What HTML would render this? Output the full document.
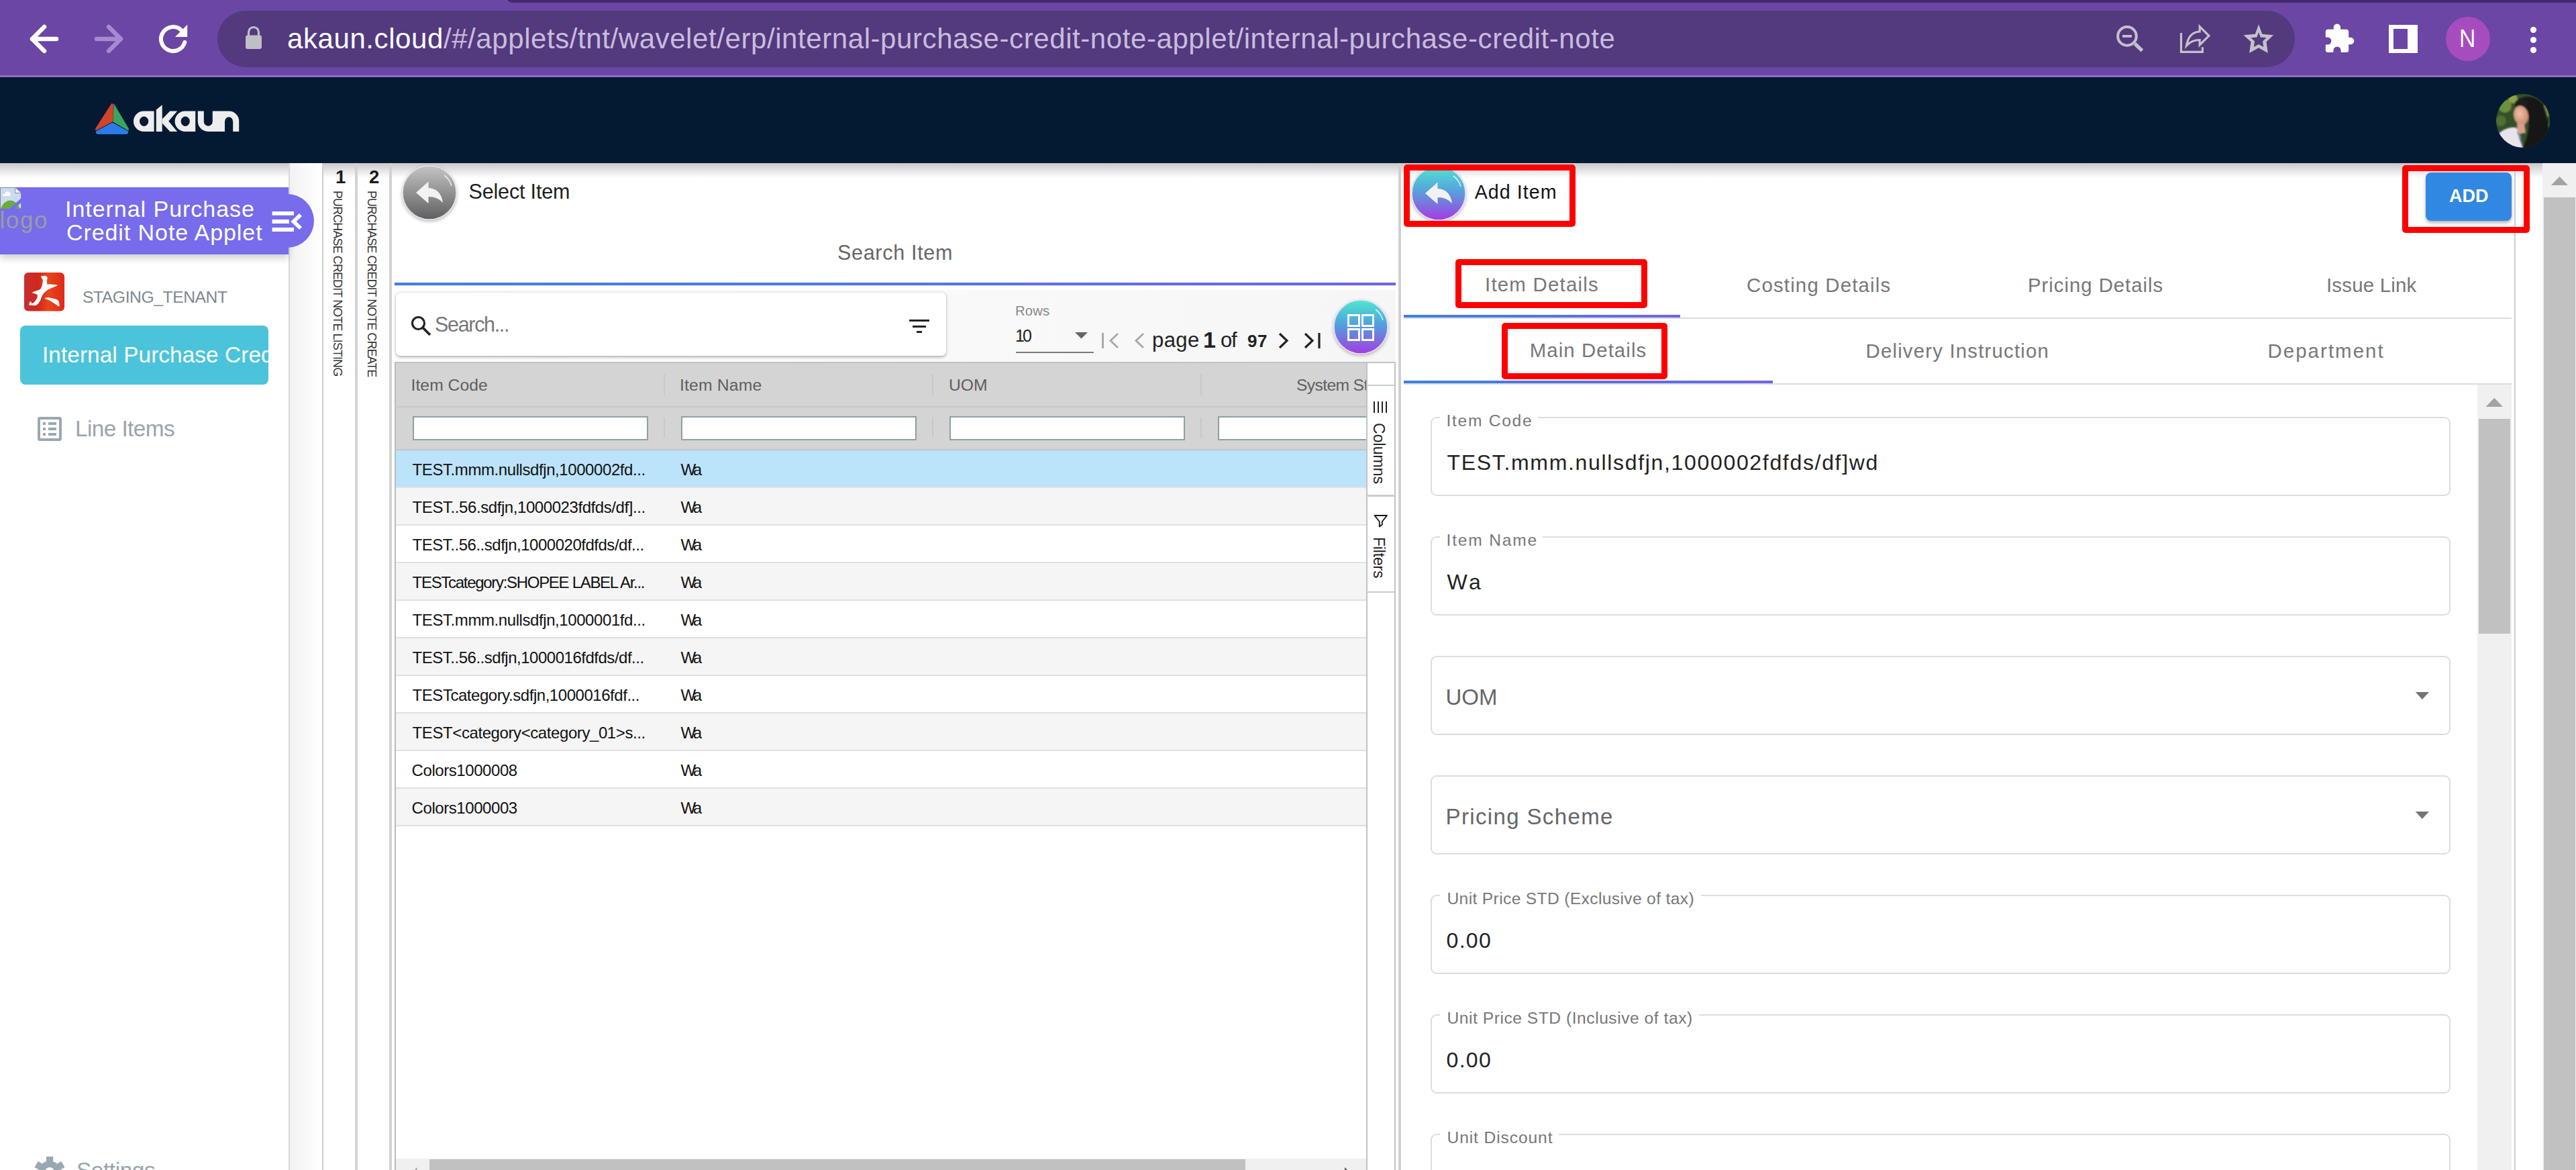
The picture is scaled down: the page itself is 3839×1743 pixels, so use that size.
<!DOCTYPE html>
<html><head><meta charset="utf-8"><style>
html,body{margin:0;padding:0;}
body{width:3839px;height:1743px;overflow:hidden;position:relative;background:#fff;font-family:"Liberation Sans", sans-serif;}
.t{position:absolute;white-space:nowrap;line-height:1;}
svg{overflow:visible;display:block}
</style></head><body>
<div style="position:absolute;left:0px;top:0px;width:3839px;height:113px;background:#6B46A5"></div>
<div style="position:absolute;left:0px;top:112px;width:3839px;height:3px;background:#8C6DC3"></div>
<div style="position:absolute;left:754px;top:-7px;width:3125px;height:10.5px;background:#43296B;border-radius:0 0 0 10px"></div>
<div style="position:absolute;left:324px;top:16px;width:3096px;height:84px;background:#53397E;border-radius:42px"></div>
<svg style="position:absolute;left:30px;top:25px;" width="70" height="70" viewBox="30 25 70 70"><path d="M48 58 H84 M66 40 L48 58 L66 76" stroke="#fff" stroke-width="6.5" fill="none" stroke-linecap="round" stroke-linejoin="round"/></svg>
<svg style="position:absolute;left:130px;top:25px;" width="70" height="70" viewBox="130 25 70 70"><path d="M144 58 H180 M162 40 L180 58 L162 76" stroke="#A68AD0" stroke-width="6.5" fill="none" stroke-linecap="round" stroke-linejoin="round"/></svg>
<svg style="position:absolute;left:225px;top:25px;" width="70" height="70" viewBox="225 25 70 70"><path d="M275.3 63 A18 18 0 1 1 270.7 45.3" stroke="#fff" stroke-width="6" fill="none" stroke-linecap="round"/><path d="M261 55 L279.2 55 L279.2 36.8 Z" fill="#fff"/></svg>
<svg style="position:absolute;left:360px;top:35px;" width="40" height="45" viewBox="360 35 40 45"><rect x="366" y="52.5" width="24" height="20.5" rx="3" fill="#BEC0C4"/><path d="M370.5 54 V48 A7.5 7.5 0 0 1 385.5 48 V54" stroke="#BEC0C4" stroke-width="3.2" fill="none"/></svg>
<div class="t" style="left:428px;top:36.95px;font-size:42px;letter-spacing:0.58px;color:#C9BCDD"><span style="color:#fff">akaun.cloud</span>/#/applets/tnt/wavelet/erp/internal-purchase-credit-note-applet/internal-purchase-credit-note</div>
<svg style="position:absolute;left:3140px;top:25px;" width="70" height="70" viewBox="3140 25 70 70"><circle cx="3170" cy="53.9" r="13.8" stroke="#C4C2C8" stroke-width="4" fill="none"/><path d="M3163 53.9 H3177" stroke="#C4C2C8" stroke-width="3.8"/><path d="M3181.5 65 L3192.5 75.5" stroke="#C4C2C8" stroke-width="5.2"/></svg>
<svg style="position:absolute;left:3240px;top:25px;" width="70" height="70" viewBox="3240 25 70 70"><path d="M3250.5 49 V77.3 H3282.4 V70.3" stroke="#C4C2C8" stroke-width="3.2" fill="none"/><path d="M3258.5 68 C3261 54 3268 47.5 3278.2 47 V39.5 L3292 53.3 L3278.2 67 V59.5 C3270 59.5 3263.5 62.5 3258.5 68 Z" stroke="#C4C2C8" stroke-width="3.2" fill="none" stroke-linejoin="miter"/></svg>
<svg style="position:absolute;left:3330px;top:25px;" width="70" height="70" viewBox="3330 25 70 70"><path d="M3366.1 36.2 L3371.3 50.8 L3388.1 52.3 L3377.6 62.3 L3379.8 79.0 L3366.1 71.3 L3352.1 79.0 L3354.6 62.3 L3343.4 52.3 L3360.9 50.8 Z M3366.1 47.9 L3368.8 55.5 L3377.5 56.2 L3372.1 61.4 L3373.2 70.1 L3366.1 66.1 L3358.8 70.1 L3360.1 61.4 L3354.3 56.2 L3363.4 55.5 Z" fill="#C4C2C8" fill-rule="evenodd"/></svg>
<svg style="position:absolute;left:3455px;top:25px;" width="65" height="70" viewBox="3455 25 65 70"><path d="M3469.3 43.8 H3477.7 V40.7 A5.2 5.2 0 0 1 3488.1 40.7 V43.8 H3496.7 A3.5 3.5 0 0 1 3500.2 47.3 V55.7 H3503 A5.3 5.3 0 0 1 3503 66.3 H3500.2 V74.6 A3.5 3.5 0 0 1 3496.7 78.1 H3488.6 V75 A5.6 5.6 0 0 0 3477.4 75 V78.1 H3469.3 A3.5 3.5 0 0 1 3465.8 74.6 V66.6 H3468.8 A5.6 5.6 0 0 0 3468.8 55.4 H3465.8 V47.3 A3.5 3.5 0 0 1 3469.3 43.8 Z" fill="#fff"/></svg>
<svg style="position:absolute;left:3550px;top:25px;" width="65" height="70" viewBox="3550 25 65 70"><rect x="3560" y="37" width="43" height="42" fill="#fff"/><rect x="3567" y="43" width="21" height="30" fill="#6B46A5"/></svg>
<svg style="position:absolute;left:3640px;top:20px;" width="80" height="80" viewBox="3640 20 80 80"><circle cx="3678" cy="58" r="33" fill="#A74CBE"/></svg>
<div class="t" style="left:3665.00px;top:39.26px;font-size:37.5px;color:#FFFFFF;transform:scaleX(0.9);transform-origin:0 0;">N</div>
<svg style="position:absolute;left:3760px;top:30px;" width="30" height="60" viewBox="3760 30 30 60"><circle cx="3775.5" cy="44.5" r="4.6" fill="#fff"/><circle cx="3775.5" cy="59.5" r="4.6" fill="#fff"/><circle cx="3775.5" cy="74.5" r="4.6" fill="#fff"/></svg>
<div style="position:absolute;left:0px;top:115px;width:3839px;height:128px;background:#041A33"></div>
<svg style="position:absolute;left:135px;top:145px;" width="65" height="60" viewBox="135 145 65 60">
<path d="M165 156 Q167 152 169 156 L168.5 181 L144 194 Q141 195 142.5 191 Z" fill="#D1432A"/>
<path d="M169.5 154 L191.5 191 Q193 195 190 194 L168.5 181.5 Z" fill="#3BA55F"/>
<path d="M143 195.5 L167.5 182.5 L191 195.5 Q192 200 187 200 L147 200 Q142 200 143 195.5 Z" fill="#2B7BEA"/></svg>
<svg style="position:absolute;left:190px;top:150px;" width="175" height="50" viewBox="190 150 175 50"><g fill="#EDEDED" fill-rule="evenodd">
<path d="M229.6 165.5 H214.2 A15.2 15.2 0 0 0 214.2 195.9 H229.6 Z M214.6 173.5 A6.6 7.2 0 1 0 214.61 173.5 Z"/>
<path d="M232.8 195.9 V163.5 L241.7 156.2 V195.9 Z"/>
<path d="M241.7 177.5 L253.3 165.5 H264.2 L251.2 180.6 L264.2 195.9 H253.3 L241.7 183.5 Z"/>
<path d="M291.2 165.5 H275.8 A15.2 15.2 0 0 0 275.8 195.9 H291.2 Z M276.2 173.5 A6.6 7.2 0 1 0 276.21 173.5 Z"/>
<path d="M294.8 165.5 H303.8 V181 A6.5 6.8 0 0 0 316.8 181 V165.5 H326 V195.9 H310 A15.2 15.2 0 0 1 294.8 181 Z"/>
<path d="M326 195.9 V165.5 H341.2 A15 15 0 0 1 356.2 180.5 V195.9 H347.2 V181 A6.1 6.8 0 0 0 335 181 V195.9 Z"/>
</g></svg>
<svg style="position:absolute;left:3715px;top:135px;" width="90" height="90" viewBox="3715 135 90 90">
<defs><clipPath id="av"><circle cx="3760" cy="180" r="40"/></clipPath>
<radialGradient id="face" cx="0.45" cy="0.4" r="0.6"><stop offset="0" stop-color="#f0c0a8"/><stop offset="1" stop-color="#c98a70"/></radialGradient>
<filter id="avb"><feGaussianBlur stdDeviation="1.2"/></filter></defs>
<g clip-path="url(#av)">
<rect x="3715" y="135" width="90" height="90" fill="#34502a"/>
<g filter="url(#avb)">
<circle cx="3733" cy="158" r="10" fill="#6e8f3c"/>
<circle cx="3745" cy="147" r="7" fill="#8aa34a"/>
<circle cx="3727" cy="180" r="8" fill="#4f6f2f"/>
<circle cx="3795" cy="165" r="9" fill="#6b8a3a"/>
<circle cx="3797" cy="190" r="7" fill="#557a33"/>
<path d="M3750 150 Q3772 136 3790 155 Q3802 185 3800 225 L3757 225 Q3768 205 3769 185 Q3768 162 3750 158 Z" fill="#141414"/>
<path d="M3748 152 Q3758 144 3768 150 L3766 160 Q3756 154 3748 160 Z" fill="#1a1a1a"/>
<ellipse cx="3757" cy="172" rx="11" ry="14.5" fill="url(#face)" transform="rotate(-12 3757 172)"/>
<path d="M3751 184 L3762 184 L3764 198 L3752 200 Z" fill="#d8a088"/>
<path d="M3718 205 Q3732 188 3750 190 L3756 202 L3760 225 L3718 225 Z" fill="#e8e4ec"/>
<path d="M3752 196 L3758 214" stroke="#5a6aa0" stroke-width="2"/>
</g>
</g></svg>
<div style="position:absolute;left:0px;top:243px;width:3839px;height:22px;background:linear-gradient(#c9c9c9,rgba(255,255,255,0))"></div>
<div style="position:absolute;left:430px;top:243px;width:2px;height:1500px;background:#d9d9d9"></div>
<div style="position:absolute;left:432px;top:243px;width:48px;height:1500px;background:linear-gradient(90deg,#f2f2f2,#ffffff)"></div>
<div style="position:absolute;left:0px;top:279px;width:430px;height:99.5px;background:#776CEB;box-shadow:0 6px 10px rgba(0,0,0,0.18)"></div>
<svg style="position:absolute;left:380px;top:285px;" width="90" height="90" viewBox="380 285 90 90"><circle cx="428" cy="329" r="40" fill="#776CEB"/></svg>
<svg style="position:absolute;left:0px;top:278px;" width="34" height="34" viewBox="0 278 34 34"><path d="M0.5 279.5 H22.5 L31.5 288.5 V310.5 H0.5 Z" fill="#cadcf3" stroke="#8a8a8a" stroke-width="1"/>
<path d="M22.5 279.5 V287.5 H31.5" fill="#f6f6f6" stroke="#8a8a8a" stroke-width="1"/>
<path d="M1 310.5 Q6 299 15 298.5 Q24 298.5 30 310.5 Z" fill="#67ad3b"/>
<path d="M4 292 Q4 289 7 289 Q8 285 12 285.5 Q15 286 15.5 289.5 Q16 292 14 292 Z" fill="#fff"/>
<path d="M13.7 311.5 L21.2 311.5 L32 301.5 L32 294.8 Z" fill="#776CEB"/></svg>
<div class="t" style="left:-0.50px;top:309.97px;font-size:35px;color:#989CA4;letter-spacing:1.598px;">logo</div>
<div class="t" style="left:97.00px;top:293.82px;font-size:34px;color:#FFFFFF;letter-spacing:0.964px;">Internal Purchase</div>
<div class="t" style="left:99.00px;top:329.22px;font-size:34px;color:#FFFFFF;letter-spacing:0.920px;">Credit Note Applet</div>
<svg style="position:absolute;left:400px;top:310px;" width="55" height="40" viewBox="400 310 55 40"><path d="M405.6 317.8 H438 M405.6 330 H430.8 M405.6 342 H438" stroke="#fff" stroke-width="5.8"/><path d="M448 320 L437.5 330 L448 340" stroke="#fff" stroke-width="5.8" fill="none"/></svg>
<svg style="position:absolute;left:30px;top:400px;" width="70" height="70" viewBox="30 400 70 70"><defs><linearGradient id="tl" x1="0" x2="1"><stop offset="0" stop-color="#c53030"/><stop offset="0.35" stop-color="#d0281c"/><stop offset="0.6" stop-color="#e6461a"/><stop offset="1" stop-color="#e0281a"/></linearGradient></defs>
<rect x="36" y="406" width="60" height="57.5" rx="6" fill="url(#tl)"/>
<path d="M61 411.8 Q64 410.5 67.9 411 Q71.5 412.5 70.6 414.8 Q69.6 418 70 421 L70.6 423.7 Q74 423 76 423.4 Q82 423.8 86.3 424.8 Q84 426.5 80.2 427.8 Q75 429.5 70.6 432 Q66.5 435 63.8 438.8 Q61.5 443 60.4 447 Q58.5 450.5 57 452.5 Q54.5 455 52 455.2 L43.3 454.5 Q43.5 451 44.6 449.7 Q45.5 448.8 46 449 Q46.8 451.5 47.4 451.8 Q49.5 451.5 50.8 450.4 Q54 447 55.6 442.9 Q56.3 440 55 438.5 Q51 437 47.4 436 Q50 434.5 54.2 433.3 Q58.5 432 60.4 430.6 Q62.5 427 63 423.7 Q63.8 420 63.8 416.9 Q61.5 414 61 411.8 Z" fill="#fff"/>
<path d="M66.5 443.9 Q69 443 72 443.2 Q78 444 82.9 445.6 Q87 447 87.7 449 Q88.8 452.5 88.4 456.6 Q87 456.5 85.7 455.2 Q81.5 452.5 77.5 449.7 Q72.5 446.5 67.9 445.3 Z" fill="#fff"/></svg>
<div class="t" style="left:123.00px;top:431.09px;font-size:24.7px;color:#7E888E;letter-spacing:-0.436px;">STAGING_TENANT</div>
<div style="position:absolute;left:30px;top:485px;width:370px;height:88px;background:#4BC4DB;border-radius:8px"></div>
<div style="position:absolute;left:30px;top:485px;width:370px;height:88px;overflow:hidden"><div style="position:absolute;left:-30px;top:-485px"><div class="t" style="left:63.00px;top:511.73px;font-size:33.4px;color:#FFFFFF;letter-spacing:0.058px;">Internal Purchase Cred</div></div></div>
<svg style="position:absolute;left:50px;top:615px;" width="50" height="50" viewBox="50 615 50 50"><rect x="58" y="623" width="32" height="32" rx="1.5" stroke="#9AA8B0" stroke-width="4" fill="none"/>
<path d="M64 631 h4 M72 631 h12 M64 639 h4 M72 639 h12 M64 647 h4 M72 647 h12" stroke="#9AA8B0" stroke-width="3.8"/></svg>
<div class="t" style="left:112.00px;top:621.73px;font-size:33.4px;color:#9AA4AB;letter-spacing:-0.594px;">Line Items</div>
<svg style="position:absolute;left:45px;top:1715px;" width="60" height="28" viewBox="45 1715 60 28"><g fill="#98A8B0"><circle cx="74" cy="1746" r="16.5"/><rect x="68.9" y="1723" width="10.3" height="9" transform="rotate(0 74 1746)"/><rect x="68.9" y="1723" width="10.3" height="9" transform="rotate(60 74 1746)"/><rect x="68.9" y="1723" width="10.3" height="9" transform="rotate(-60 74 1746)"/></g><circle cx="74" cy="1746" r="7" fill="#fff"/></svg>
<div class="t" style="left:114.00px;top:1726.73px;font-size:33.4px;color:#9AA4AB;letter-spacing:-0.422px;">Settings</div>
<div style="position:absolute;left:480px;top:243px;width:2px;height:1500px;background:#cdcdcd"></div>
<div style="position:absolute;left:529px;top:243px;width:3.6000000000000227px;height:1500px;background:#d2d2d2"></div>
<div style="position:absolute;left:580px;top:243px;width:3.5px;height:1500px;background:#d2d2d2"></div>
<div class="t" style="left:500.00px;top:249.64px;font-size:27.6px;color:#1a1a1a;font-weight:700;">1</div>
<div class="t" style="left:550.00px;top:249.64px;font-size:27.6px;color:#1a1a1a;font-weight:700;">2</div>
<div class="t" style="left:493.74px;top:283.50px;font-size:18px;color:#333;letter-spacing:-0.909px;writing-mode:vertical-rl;text-orientation:sideways;">PURCHASE CREDIT NOTE LISTING</div>
<div class="t" style="left:544.74px;top:283.50px;font-size:18px;color:#333;letter-spacing:-0.969px;writing-mode:vertical-rl;text-orientation:sideways;">PURCHASE CREDIT NOTE CREATE</div>
<svg style="position:absolute;left:592px;top:239px;" width="96" height="98" viewBox="592 239 96 98"><defs><linearGradient id="rg1" x1="0" y1="0" x2="0" y2="1"><stop offset="0" stop-color="#c4c4c4"/><stop offset="1" stop-color="#5f5f5f"/></linearGradient>
<filter id="rg1s" x="-30%" y="-30%" width="160%" height="160%"><feDropShadow dx="0" dy="2" stdDeviation="2.5" flood-color="#000" flood-opacity="0.3"/></filter></defs>
<circle cx="640" cy="287" r="40" fill="url(#rg1)" stroke="#e6dff0" stroke-width="1.5" filter="url(#rg1s)"/>
<path d="M662 261 A30 30 0 0 1 673 277" stroke="rgba(255,255,255,0.75)" stroke-width="1.6" fill="none"/>
<path d="M620 287 L638.5 270.5 L638.5 280 Q657 281 660 302 Q652 293 638.5 293 L638.5 303 Z" fill="#f2f2f2"/></svg>
<div class="t" style="left:698.50px;top:270.18px;font-size:30.5px;color:#1E1E1E;letter-spacing:-0.165px;">Select Item</div>
<div class="t" style="left:1248.00px;top:361.18px;font-size:30.5px;color:#666666;letter-spacing:0.698px;">Search Item</div>
<div style="position:absolute;left:588px;top:421px;width:1492px;height:3.5px;background:linear-gradient(90deg,#3B83E0,#6B66E6)"></div>
<div style="position:absolute;left:588px;top:424.5px;width:1492px;height:1.5px;background:#e3e3e0"></div>
<div style="position:absolute;left:588px;top:432px;width:1492px;height:107px;background:linear-gradient(90deg,#fdfdfd,#f6f6f6)"></div>
<div style="position:absolute;left:590px;top:436px;width:820px;height:94px;background:#fff;border-radius:7px;box-shadow:0 1.5px 4px rgba(0,0,0,0.32)"></div>
<svg style="position:absolute;left:605px;top:465px;" width="45" height="40" viewBox="605 465 45 40"><circle cx="623.5" cy="481.5" r="9" stroke="#222" stroke-width="3.2" fill="none"/><path d="M630 488 L641 499" stroke="#222" stroke-width="3.8"/></svg>
<div class="t" style="left:648.00px;top:468.18px;font-size:30.5px;color:#777777;letter-spacing:-1.323px;">Search...</div>
<svg style="position:absolute;left:1350px;top:470px;" width="40" height="30" viewBox="1350 470 40 30"><rect x="1355" y="476" width="30" height="3" fill="#222"/><rect x="1360" y="485" width="20" height="3" fill="#222"/><rect x="1366" y="493" width="8" height="3" fill="#222"/></svg>
<div class="t" style="left:1513.00px;top:452.82px;font-size:20.3px;color:#888888;letter-spacing:0.143px;">Rows</div>
<div class="t" style="left:1513.00px;top:487.54px;font-size:25px;color:#222222;letter-spacing:-2.904px;">10</div>
<div style="position:absolute;left:1514px;top:523.5px;width:116px;height:2.0px;background:#7a7a7a"></div>
<svg style="position:absolute;left:1595px;top:490px;" width="35" height="20" viewBox="1595 490 35 20"><path d="M1602 495 L1621 495 L1611.5 504.6 Z" fill="#666"/></svg>
<svg style="position:absolute;left:1635px;top:490px;" width="340" height="35" viewBox="1635 490 340 35"><path d="M1643.5 496 V519" stroke="#aaa" stroke-width="3"/><path d="M1666 497 L1655 507.5 L1666 518" stroke="#aaa" stroke-width="3" fill="none"/>
<path d="M1704 497 L1693 507.5 L1704 518" stroke="#aaa" stroke-width="3" fill="none"/>
<path d="M1907 497 L1918 507.5 L1907 518" stroke="#222" stroke-width="3.2" fill="none"/>
<path d="M1945 497 L1956 507.5 L1945 518" stroke="#222" stroke-width="3.2" fill="none"/><path d="M1966 496 V519" stroke="#222" stroke-width="3.2"/></svg>
<div class="t" style="left:1717.00px;top:490.76px;font-size:31px;color:#222222;letter-spacing:0.426px;">page</div>
<div class="t" style="left:1793.00px;top:488.62px;font-size:34px;color:#222222;font-weight:700;">1</div>
<div class="t" style="left:1819.00px;top:490.76px;font-size:31px;color:#222222;letter-spacing:-1.241px;">of</div>
<div class="t" style="left:1859.00px;top:494.99px;font-size:26px;color:#222222;font-weight:700;letter-spacing:0.540px;">97</div>
<svg style="position:absolute;left:1980px;top:440px;" width="96" height="96" viewBox="1980 440 96 96"><defs><linearGradient id="gg" x1="0" y1="0" x2="0" y2="1"><stop offset="0" stop-color="#4FE8CF"/><stop offset="0.45" stop-color="#4FA2DE"/><stop offset="1" stop-color="#A53CE3"/></linearGradient>
<filter id="ggs" x="-30%" y="-30%" width="160%" height="160%"><feDropShadow dx="0" dy="2" stdDeviation="2.5" flood-color="#000" flood-opacity="0.3"/></filter></defs>
<circle cx="2028" cy="487" r="40" fill="url(#gg)" stroke="#e6dff0" stroke-width="1.5" filter="url(#ggs)"/>
<path d="M2050 461 A30 30 0 0 1 2061 477" stroke="rgba(255,255,255,0.75)" stroke-width="1.6" fill="none"/>
<g stroke="#fff" stroke-width="3" fill="none"><rect x="2009.5" y="469.5" width="16" height="16"/><rect x="2030.5" y="469.5" width="16" height="16"/><rect x="2009.5" y="490.5" width="16" height="16"/><rect x="2030.5" y="490.5" width="16" height="16"/></g></svg>
<div style="position:absolute;left:588px;top:539px;width:1449px;height:131px;background:#D4D4D4"></div>
<div style="position:absolute;left:588px;top:539px;width:1449px;height:1.5px;background:#BDC3C7"></div>
<div style="position:absolute;left:588px;top:539px;width:1.5px;height:1204px;background:#B5BCC2"></div>
<div style="position:absolute;left:588px;top:605px;width:1449px;height:2px;background:#C2C8CC"></div>
<div style="position:absolute;left:588px;top:669px;width:1449px;height:2px;background:#BFC5C9"></div>
<div style="position:absolute;left:989px;top:557px;width:1.5px;height:31.5px;background:#C4C9CC"></div>
<div style="position:absolute;left:989px;top:622px;width:1.5px;height:30px;background:#C4C9CC"></div>
<div style="position:absolute;left:1389px;top:557px;width:1.5px;height:31.5px;background:#C4C9CC"></div>
<div style="position:absolute;left:1389px;top:622px;width:1.5px;height:30px;background:#C4C9CC"></div>
<div style="position:absolute;left:1789px;top:557px;width:1.5px;height:31.5px;background:#C4C9CC"></div>
<div style="position:absolute;left:1789px;top:622px;width:1.5px;height:30px;background:#C4C9CC"></div>
<div style="position:absolute;left:614.5px;top:620px;width:351.5px;height:35.5px;background:#fff;border:2px solid #8FA0A0;box-sizing:border-box"></div>
<div style="position:absolute;left:1014.5px;top:620px;width:351.5px;height:35.5px;background:#fff;border:2px solid #8FA0A0;box-sizing:border-box"></div>
<div style="position:absolute;left:1414.5px;top:620px;width:351.5px;height:35.5px;background:#fff;border:2px solid #8FA0A0;box-sizing:border-box"></div>
<div style="position:absolute;left:1814.5px;top:620px;width:245.5px;height:35.5px;background:#fff;border:2px solid #8FA0A0;box-sizing:border-box"></div>
<div style="position:absolute;left:2037px;top:539px;width:42px;height:1204px;background:#fff"></div>
<div class="t" style="left:612.60px;top:562.09px;font-size:24.7px;color:#5E5E5E;letter-spacing:0.030px;">Item Code</div>
<div class="t" style="left:1013.00px;top:562.09px;font-size:24.7px;color:#5E5E5E;letter-spacing:0.176px;">Item Name</div>
<div class="t" style="left:1414.00px;top:562.09px;font-size:24.7px;color:#5E5E5E;letter-spacing:-0.016px;">UOM</div>
<div style="position:absolute;left:1790px;top:539px;width:247px;height:131px;overflow:hidden"><div style="position:absolute;left:-1790px;top:-539px"><div class="t" style="left:1932.00px;top:562.09px;font-size:24.7px;color:#5E5E5E;letter-spacing:-0.651px;">System Status</div></div></div>
<div style="position:absolute;left:589.5px;top:671px;width:1447.5px;height:55px;background:#BBE3FA"></div>
<div style="position:absolute;left:589.5px;top:725px;width:1447.5px;height:2px;background:#DDE1E3"></div>
<div class="t" style="left:614.60px;top:687.68px;font-size:24px;color:#111111;letter-spacing:-0.420px;">TEST.mmm.nullsdfjn,1000002fd...</div>
<div class="t" style="left:1014.60px;top:687.68px;font-size:24px;color:#111111;letter-spacing:-3.662px;">Wa</div>
<div style="position:absolute;left:589.5px;top:727px;width:1447.5px;height:55px;background:#F5F5F5"></div>
<div style="position:absolute;left:589.5px;top:781px;width:1447.5px;height:2px;background:#DDE1E3"></div>
<div class="t" style="left:614.60px;top:743.68px;font-size:24px;color:#111111;letter-spacing:-0.424px;">TEST..56.sdfjn,1000023fdfds/df]...</div>
<div class="t" style="left:1014.60px;top:743.68px;font-size:24px;color:#111111;letter-spacing:-3.662px;">Wa</div>
<div style="position:absolute;left:589.5px;top:783px;width:1447.5px;height:55px;background:#FFFFFF"></div>
<div style="position:absolute;left:589.5px;top:837px;width:1447.5px;height:2px;background:#DDE1E3"></div>
<div class="t" style="left:614.60px;top:799.68px;font-size:24px;color:#111111;letter-spacing:-0.485px;">TEST..56..sdfjn,1000020fdfds/df...</div>
<div class="t" style="left:1014.60px;top:799.68px;font-size:24px;color:#111111;letter-spacing:-3.662px;">Wa</div>
<div style="position:absolute;left:589.5px;top:839px;width:1447.5px;height:55px;background:#F5F5F5"></div>
<div style="position:absolute;left:589.5px;top:893px;width:1447.5px;height:2px;background:#DDE1E3"></div>
<div class="t" style="left:614.60px;top:855.68px;font-size:24px;color:#111111;letter-spacing:-1.303px;">TESTcategory:SHOPEE LABEL Ar...</div>
<div class="t" style="left:1014.60px;top:855.68px;font-size:24px;color:#111111;letter-spacing:-3.662px;">Wa</div>
<div style="position:absolute;left:589.5px;top:895px;width:1447.5px;height:55px;background:#FFFFFF"></div>
<div style="position:absolute;left:589.5px;top:949px;width:1447.5px;height:2px;background:#DDE1E3"></div>
<div class="t" style="left:614.60px;top:911.68px;font-size:24px;color:#111111;letter-spacing:-0.420px;">TEST.mmm.nullsdfjn,1000001fd...</div>
<div class="t" style="left:1014.60px;top:911.68px;font-size:24px;color:#111111;letter-spacing:-3.662px;">Wa</div>
<div style="position:absolute;left:589.5px;top:951px;width:1447.5px;height:55px;background:#F5F5F5"></div>
<div style="position:absolute;left:589.5px;top:1005px;width:1447.5px;height:2px;background:#DDE1E3"></div>
<div class="t" style="left:614.60px;top:967.68px;font-size:24px;color:#111111;letter-spacing:-0.485px;">TEST..56..sdfjn,1000016fdfds/df...</div>
<div class="t" style="left:1014.60px;top:967.68px;font-size:24px;color:#111111;letter-spacing:-3.662px;">Wa</div>
<div style="position:absolute;left:589.5px;top:1007px;width:1447.5px;height:55px;background:#FFFFFF"></div>
<div style="position:absolute;left:589.5px;top:1061px;width:1447.5px;height:2px;background:#DDE1E3"></div>
<div class="t" style="left:614.60px;top:1023.68px;font-size:24px;color:#111111;letter-spacing:-0.459px;">TESTcategory.sdfjn,1000016fdf...</div>
<div class="t" style="left:1014.60px;top:1023.68px;font-size:24px;color:#111111;letter-spacing:-3.662px;">Wa</div>
<div style="position:absolute;left:589.5px;top:1063px;width:1447.5px;height:55px;background:#F5F5F5"></div>
<div style="position:absolute;left:589.5px;top:1117px;width:1447.5px;height:2px;background:#DDE1E3"></div>
<div class="t" style="left:614.60px;top:1079.68px;font-size:24px;color:#111111;letter-spacing:-0.413px;">TEST&lt;category&lt;category_01&gt;s...</div>
<div class="t" style="left:1014.60px;top:1079.68px;font-size:24px;color:#111111;letter-spacing:-3.662px;">Wa</div>
<div style="position:absolute;left:589.5px;top:1119px;width:1447.5px;height:55px;background:#FFFFFF"></div>
<div style="position:absolute;left:589.5px;top:1173px;width:1447.5px;height:2px;background:#DDE1E3"></div>
<div class="t" style="left:613.60px;top:1135.68px;font-size:24px;color:#111111;letter-spacing:-0.436px;">Colors1000008</div>
<div class="t" style="left:1014.60px;top:1135.68px;font-size:24px;color:#111111;letter-spacing:-3.662px;">Wa</div>
<div style="position:absolute;left:589.5px;top:1175px;width:1447.5px;height:55px;background:#F5F5F5"></div>
<div style="position:absolute;left:589.5px;top:1229px;width:1447.5px;height:2px;background:#DDE1E3"></div>
<div class="t" style="left:613.60px;top:1191.68px;font-size:24px;color:#111111;letter-spacing:-0.436px;">Colors1000003</div>
<div class="t" style="left:1014.60px;top:1191.68px;font-size:24px;color:#111111;letter-spacing:-3.662px;">Wa</div>
<div style="position:absolute;left:589.5px;top:1726px;width:1447.5px;height:17px;background:#F0F0F0"></div>
<div style="position:absolute;left:640px;top:1727px;width:1216px;height:16px;background:#C1C1C1"></div>
<div style="position:absolute;left:2036px;top:539px;width:2px;height:1204px;background:#BDC3C7"></div>
<div style="position:absolute;left:2078px;top:539px;width:1.5px;height:1204px;background:#BDC3C7"></div>
<div style="position:absolute;left:2037px;top:539px;width:42px;height:1.5px;background:#BDC3C7"></div>
<div style="position:absolute;left:2037px;top:573px;width:42px;height:2px;background:#C8CDD0"></div>
<div style="position:absolute;left:2037px;top:737px;width:42px;height:3px;background:#C8CDD0"></div>
<div style="position:absolute;left:2037px;top:881px;width:42px;height:2px;background:#C8CDD0"></div>
<svg style="position:absolute;left:2040px;top:590px;" width="35" height="30" viewBox="2040 590 35 30"><path d="M2048 598 V615 M2054 598 V615 M2060 598 V615 M2066 598 V615" stroke="#222" stroke-width="2"/></svg>
<div class="t" style="left:2043.47px;top:629.50px;font-size:23px;color:#222;letter-spacing:0.041px;writing-mode:vertical-rl;text-orientation:sideways;">Columns</div>
<svg style="position:absolute;left:2040px;top:760px;" width="35" height="30" viewBox="2040 760 35 30"><path d="M2048.5 768 H2067 L2059.8 777 V781.5 L2055.8 784.5 V777 Z" stroke="#111" stroke-width="1.8" fill="none" stroke-linejoin="round"/></svg>
<div class="t" style="left:2043.47px;top:799.50px;font-size:23px;color:#222;letter-spacing:-0.185px;writing-mode:vertical-rl;text-orientation:sideways;">Filters</div>
<div style="position:absolute;left:2084px;top:243px;width:4px;height:1500px;background:#D0D0D0"></div>
<div style="position:absolute;left:3747px;top:243px;width:2px;height:1500px;background:#CDCDCD"></div>
<svg style="position:absolute;left:2096px;top:240px;" width="96" height="98" viewBox="2096 240 96 98"><defs><linearGradient id="rg2" x1="0" y1="0" x2="0" y2="1"><stop offset="0" stop-color="#4FE3D2"/><stop offset="0.45" stop-color="#56A3DC"/><stop offset="1" stop-color="#A53BE3"/></linearGradient>
<filter id="rg2s" x="-30%" y="-30%" width="160%" height="160%"><feDropShadow dx="0" dy="2" stdDeviation="2.5" flood-color="#000" flood-opacity="0.3"/></filter></defs>
<circle cx="2144" cy="288" r="40" fill="url(#rg2)" stroke="#e6dff0" stroke-width="1.5" filter="url(#rg2s)"/>
<path d="M2166 262 A30 30 0 0 1 2177 278" stroke="rgba(255,255,255,0.75)" stroke-width="1.6" fill="none"/>
<path d="M2124 288 L2142.5 271.5 L2142.5 281 Q2161 282 2164 303 Q2156 294 2142.5 294 L2142.5 304 Z" fill="#f2f2f2"/></svg>
<div class="t" style="left:2197.70px;top:271.79px;font-size:28.6px;color:#111111;letter-spacing:1.055px;">Add Item</div>
<div style="position:absolute;left:3615px;top:257px;width:128px;height:72px;background:#3188E2;border-radius:8px;box-shadow:0 3px 5px rgba(0,0,0,0.3)"></div>
<div class="t" style="left:3650.00px;top:279.14px;font-size:27px;color:#FFFFFF;font-weight:700;">ADD</div>
<div class="t" style="left:2213.00px;top:409.11px;font-size:29.4px;color:#777777;letter-spacing:1.230px;">Item Details</div>
<div class="t" style="left:2603.00px;top:410.11px;font-size:29.4px;color:#777777;letter-spacing:1.181px;">Costing Details</div>
<div class="t" style="left:3022.00px;top:410.11px;font-size:29.4px;color:#777777;letter-spacing:0.954px;">Pricing Details</div>
<div class="t" style="left:3467.00px;top:410.11px;font-size:29.4px;color:#777777;letter-spacing:0.207px;">Issue Link</div>
<div style="position:absolute;left:2092px;top:472.5px;width:1651px;height:2.0px;background:#DCDCDC"></div>
<div style="position:absolute;left:2092px;top:469px;width:412px;height:4px;background:linear-gradient(90deg,#3B83E0,#6E65E6)"></div>
<div class="t" style="left:2279.70px;top:507.41px;font-size:29.4px;color:#777777;letter-spacing:1.072px;">Main Details</div>
<div class="t" style="left:2780.50px;top:507.61px;font-size:29.4px;color:#777777;letter-spacing:1.181px;">Delivery Instruction</div>
<div class="t" style="left:3379.50px;top:507.61px;font-size:29.4px;color:#777777;letter-spacing:2.068px;">Department</div>
<div style="position:absolute;left:2092px;top:570.5px;width:1651px;height:2.0px;background:#DCDCDC"></div>
<div style="position:absolute;left:2092px;top:567px;width:550px;height:4px;background:linear-gradient(90deg,#3B83E0,#6E65E6)"></div>
<div style="position:absolute;left:3692px;top:572.5px;width:51px;height:1170.5px;background:#F0F0F0"></div>
<svg style="position:absolute;left:3700px;top:585px;" width="35" height="27" viewBox="3700 585 35 27"><path d="M3704.5 606 L3730 606 L3717.25 592.7 Z" fill="#A3A3A3"/></svg>
<div style="position:absolute;left:3694px;top:624px;width:47px;height:320px;background:#C1C1C1"></div>
<div style="position:absolute;left:2132px;top:621px;width:1520px;height:118px;border:2px solid #DDDDDD;border-radius:9px;box-sizing:border-box;background:#fff"></div>
<div style="position:absolute;left:2146px;top:619px;width:146px;height:5px;background:#fff"></div>
<div class="t" style="left:2155.50px;top:614.68px;font-size:24.6px;color:#777777;letter-spacing:1.715px;">Item Code</div>
<div class="t" style="left:2156.50px;top:673.41px;font-size:32px;color:#222;letter-spacing:1.672px;">TEST.mmm.nullsdfjn,1000002fdfds/df]wd</div>
<div style="position:absolute;left:2132px;top:799px;width:1520px;height:118px;border:2px solid #DDDDDD;border-radius:9px;box-sizing:border-box;background:#fff"></div>
<div style="position:absolute;left:2146px;top:797px;width:152.5px;height:5px;background:#fff"></div>
<div class="t" style="left:2155.50px;top:792.68px;font-size:24.6px;color:#777777;letter-spacing:1.801px;">Item Name</div>
<div class="t" style="left:2156.50px;top:851.41px;font-size:32px;color:#222;letter-spacing:3.484px;">Wa</div>
<div style="position:absolute;left:2132px;top:977px;width:1520px;height:118px;border:2px solid #DDDDDD;border-radius:9px;box-sizing:border-box;background:#fff"></div>
<div class="t" style="left:2154.50px;top:1021.57px;font-size:33px;color:#666;">UOM</div>
<svg style="position:absolute;left:3595px;top:1027px;" width="30" height="20" viewBox="3595 1027 30 20"><path d="M3599.7 1031 L3620 1031 L3609.85 1042 Z" fill="#757575"/></svg>
<div style="position:absolute;left:2132px;top:1155px;width:1520px;height:118px;border:2px solid #DDDDDD;border-radius:9px;box-sizing:border-box;background:#fff"></div>
<div class="t" style="left:2154.50px;top:1199.57px;font-size:33px;color:#666;letter-spacing:1.366px;">Pricing Scheme</div>
<svg style="position:absolute;left:3595px;top:1205px;" width="30" height="20" viewBox="3595 1205 30 20"><path d="M3599.7 1209 L3620 1209 L3609.85 1220 Z" fill="#757575"/></svg>
<div style="position:absolute;left:2132px;top:1333px;width:1520px;height:118px;border:2px solid #DDDDDD;border-radius:9px;box-sizing:border-box;background:#fff"></div>
<div style="position:absolute;left:2146px;top:1331px;width:389px;height:5px;background:#fff"></div>
<div class="t" style="left:2156.50px;top:1326.68px;font-size:24.6px;color:#777777;letter-spacing:0.356px;">Unit Price STD (Exclusive of tax)</div>
<div class="t" style="left:2155.50px;top:1385.41px;font-size:32px;color:#222;letter-spacing:1.339px;">0.00</div>
<div style="position:absolute;left:2132px;top:1511px;width:1520px;height:118px;border:2px solid #DDDDDD;border-radius:9px;box-sizing:border-box;background:#fff"></div>
<div style="position:absolute;left:2146px;top:1509px;width:386px;height:5px;background:#fff"></div>
<div class="t" style="left:2156.50px;top:1504.68px;font-size:24.6px;color:#777777;letter-spacing:0.537px;">Unit Price STD (Inclusive of tax)</div>
<div class="t" style="left:2155.50px;top:1563.41px;font-size:32px;color:#222;letter-spacing:1.339px;">0.00</div>
<div style="position:absolute;left:2132px;top:1689px;width:1520px;height:118px;border:2px solid #DDDDDD;border-radius:9px;box-sizing:border-box;background:#fff"></div>
<div style="position:absolute;left:2146px;top:1687px;width:177px;height:5px;background:#fff"></div>
<div class="t" style="left:2156.50px;top:1682.68px;font-size:24.6px;color:#777777;letter-spacing:0.898px;">Unit Discount</div>
<div style="position:absolute;left:3789px;top:243px;width:50px;height:1500px;background:#F0F0F0"></div>
<svg style="position:absolute;left:3795px;top:255px;" width="40" height="30" viewBox="3795 255 40 30"><path d="M3802 276 L3827 276 L3814.5 263 Z" fill="#A3A3A3"/></svg>
<div style="position:absolute;left:3791px;top:294px;width:47px;height:1449px;background:#C1C1C1"></div>
<div style="position:absolute;left:2092px;top:244.6px;width:256px;height:93.9px;border:9px solid #FF0000;border-radius:5px;box-sizing:border-box"></div>
<div style="position:absolute;left:3580px;top:246px;width:190px;height:100.69999999999999px;border:9px solid #FF0000;border-radius:5px;box-sizing:border-box"></div>
<div style="position:absolute;left:2169px;top:386px;width:286px;height:73px;border:9px solid #FF0000;border-radius:5px;box-sizing:border-box"></div>
<div style="position:absolute;left:2238px;top:480.6px;width:247px;height:84.89999999999998px;border:9px solid #FF0000;border-radius:5px;box-sizing:border-box"></div>
<svg style="position:absolute;left:615px;top:1730px;" width="15" height="13" viewBox="615 1730 15 13"><path d="M621.5 1739 L616 1745 L621.5 1751 Z" fill="#A3A3A3"/></svg>
<svg style="position:absolute;left:1998px;top:1730px;" width="17" height="13" viewBox="1998 1730 17 13"><path d="M2004 1739 L2010 1745 L2004 1751 Z" fill="#505050"/></svg>
</body></html>
